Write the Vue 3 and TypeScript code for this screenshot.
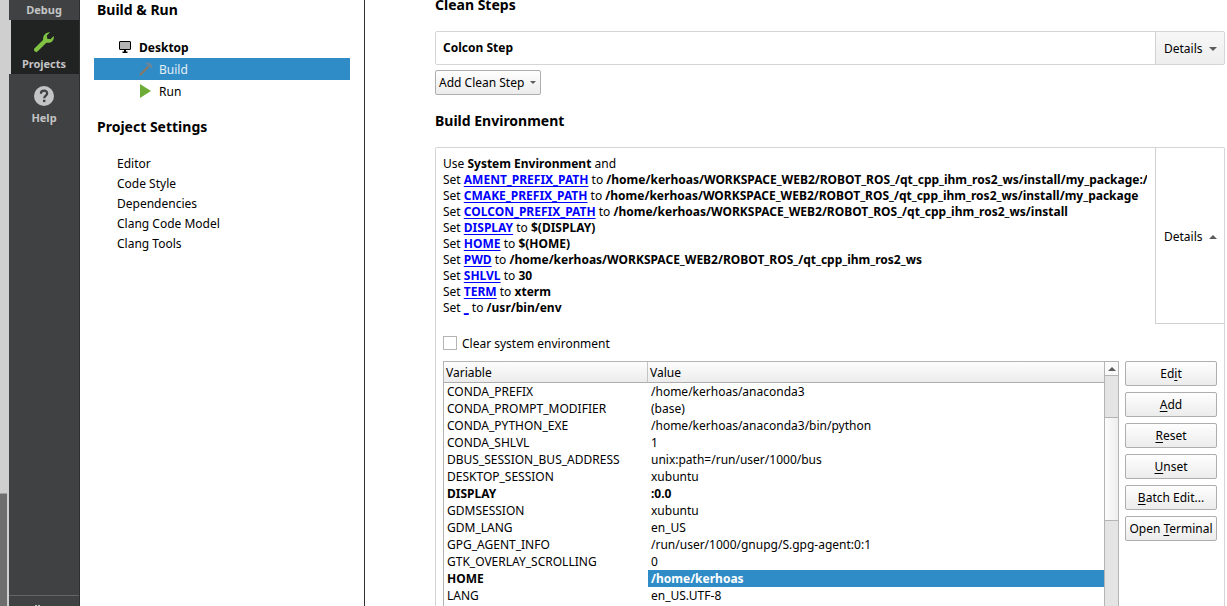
<script setup lang="ts">
import { ref } from 'vue'

interface EnvChange { name: string; value: string }
interface EnvRow { name: string; value: string; changed?: boolean; selected?: boolean }
interface Action { before: string; key: string; after: string }

const clearSystem = ref(false)

const settings: string[] = ['Editor', 'Code Style', 'Dependencies', 'Clang Code Model', 'Clang Tools']

const workspace = '/home/kerhoas/WORKSPACE_WEB2/ROBOT_ROS_/qt_cpp_ihm_ros2_ws'

const changes: EnvChange[] = [
  { name: 'AMENT_PREFIX_PATH', value: workspace + '/install/my_package:/' },
  { name: 'CMAKE_PREFIX_PATH', value: workspace + '/install/my_package' },
  { name: 'COLCON_PREFIX_PATH', value: workspace + '/install' },
  { name: 'DISPLAY', value: '$(DISPLAY)' },
  { name: 'HOME', value: '$(HOME)' },
  { name: 'PWD', value: workspace },
  { name: 'SHLVL', value: '30' },
  { name: 'TERM', value: 'xterm' },
  { name: '_', value: '/usr/bin/env' },
]

const rows: EnvRow[] = [
  { name: 'CONDA_PREFIX', value: '/home/kerhoas/anaconda3' },
  { name: 'CONDA_PROMPT_MODIFIER', value: '(base)' },
  { name: 'CONDA_PYTHON_EXE', value: '/home/kerhoas/anaconda3/bin/python' },
  { name: 'CONDA_SHLVL', value: '1' },
  { name: 'DBUS_SESSION_BUS_ADDRESS', value: 'unix:path=/run/user/1000/bus' },
  { name: 'DESKTOP_SESSION', value: 'xubuntu' },
  { name: 'DISPLAY', value: ':0.0', changed: true },
  { name: 'GDMSESSION', value: 'xubuntu' },
  { name: 'GDM_LANG', value: 'en_US' },
  { name: 'GPG_AGENT_INFO', value: '/run/user/1000/gnupg/S.gpg-agent:0:1' },
  { name: 'GTK_OVERLAY_SCROLLING', value: '0' },
  { name: 'HOME', value: '/home/kerhoas', changed: true, selected: true },
  { name: 'LANG', value: 'en_US.UTF-8' },
]

const actions: Action[] = [
  { before: 'Ed', key: 'i', after: 't' },
  { before: '', key: 'A', after: 'dd' },
  { before: '', key: 'R', after: 'eset' },
  { before: '', key: 'U', after: 'nset' },
  { before: '', key: 'B', after: 'atch Edit...' },
  { before: 'Open ', key: 'T', after: 'erminal' },
]
</script>

<template>
  <div class="window">
    <div class="outer-scroll"><div class="outer-thumb"></div></div>

    <nav class="modes" aria-label="Modes">
      <button type="button" class="mode debug">Debug</button>
      <button type="button" class="mode active">
        <svg width="22" height="22" viewBox="0 0 22 22" aria-hidden="true">
          <path d="M3.2 18.8 L11.8 10.2" stroke="#80c342" stroke-width="4.4" stroke-linecap="round" />
          <path d="M17 1.2 L13.8 4.6 L14.3 7.7 L17.4 8.2 L20.8 5 C21.4 9 18.8 12 15.2 11.8 C14.2 11.8 13 11.7 12 11.4 L10.3 9.8 C9.2 4.8 12.6 .9 17 1.2 Z" fill="#80c342" />
        </svg>
        <span>Projects</span>
      </button>
      <button type="button" class="mode">
        <svg width="22" height="22" viewBox="0 0 22 22" aria-hidden="true">
          <circle cx="11" cy="11" r="10" fill="#c3c4c5" />
          <path d="M7.9 8.7 C7.9 4.6 14.3 4.7 14.2 8.4 C14.1 10.7 11.2 10.7 11.2 13.3" fill="none" stroke="#404142" stroke-width="2.2" />
          <rect x="10" y="14.7" width="2.4" height="2.4" fill="#404142" />
        </svg>
        <span>Help</span>
      </button>
      <div class="kit">
        <svg width="22" height="20" viewBox="0 0 22 20" aria-hidden="true">
          <path d="M2 1 H4 M5 1 H7" stroke="#c3c4c5" stroke-width="2" />
        </svg>
      </div>
    </nav>

    <aside class="sidebar">
      <h2>Build &amp; Run</h2>
      <ul class="tree">
        <li class="desktop">
          <svg width="14" height="14" viewBox="0 0 14 14" aria-hidden="true">
            <rect x="1.5" y="1.5" width="11" height="8" rx=".5" fill="#b4b4b4" stroke="#000" />
            <path d="M6 10 H8 V11.5 H9.5 V13 H4.5 V11.5 H6 Z" fill="#000" />
          </svg>
          <span>Desktop</span>
        </li>
        <li class="child selected">
          <svg width="14" height="14" viewBox="0 0 14 14" aria-hidden="true">
            <path d="M1 13 L9.5 4.5" stroke="#8d7763" stroke-width="2" />
            <path d="M6.2 1.2 C9.5 0 12.7 1.4 13.6 5 L12.2 6.3 L11 4.8 L9.5 5 L8.3 3.8 L8.5 2.5 Z" fill="#6c8698" />
          </svg>
          <span>Build</span>
        </li>
        <li class="child">
          <svg width="14" height="14" viewBox="0 0 14 14" aria-hidden="true">
            <path d="M1 0 L12 7 L1 14 Z" fill="#6fac37" />
          </svg>
          <span>Run</span>
        </li>
      </ul>
      <h2>Project Settings</h2>
      <ul class="settings">
        <li v-for="item in settings" :key="item">{{ item }}</li>
      </ul>
    </aside>

    <main class="content">
      <h2 class="clean-title">Clean Steps</h2>
      <section class="step">
        <strong>Colcon Step</strong>
        <button type="button" class="details raised">
          <span>Details</span>
          <svg width="8" height="4" viewBox="0 0 8 4" aria-hidden="true"><path d="M0 0 H8 L4 4 Z" fill="#5c5c5c" /></svg>
        </button>
      </section>
      <button type="button" class="btn add-step">
        Add Clean Step
        <svg width="6" height="3" viewBox="0 0 6 3" aria-hidden="true"><path d="M0 0 H6 L3 3 Z" fill="#5c5c5c" /></svg>
      </button>

      <h2 class="env-title">Build Environment</h2>
      <section class="env">
        <div class="summary-row">
          <div class="summary">
            <div>Use <b>System Environment</b> and</div>
            <div v-for="c in changes" :key="c.name">Set <a href="#"><b>{{ c.name }}</b></a> to <b>{{ c.value }}</b></div>
          </div>
          <button type="button" class="details open">
            <span>Details</span>
            <svg width="8" height="4" viewBox="0 0 8 4" aria-hidden="true"><path d="M0 4 H8 L4 0 Z" fill="#5c5c5c" /></svg>
          </button>
        </div>

        <label class="clear">
          <input v-model="clearSystem" type="checkbox" />
          <span>Clear system environment</span>
        </label>

        <div class="editor">
          <div class="table-frame">
            <div class="table-view">
              <table>
                <thead>
                  <tr><th scope="col" class="name">Variable</th><th scope="col">Value</th></tr>
                </thead>
                <tbody>
                  <tr v-for="r in rows" :key="r.name" :class="{ changed: r.changed, current: r.selected }">
                    <td>{{ r.name }}</td>
                    <td>{{ r.value }}</td>
                  </tr>
                </tbody>
              </table>
            </div>
            <div class="scrollbar">
              <button type="button" class="arrow" aria-label="Scroll up">
                <svg width="8" height="4" viewBox="0 0 8 4" aria-hidden="true"><path d="M0 4 H8 L4 0 Z" fill="#5c5c5c" /></svg>
              </button>
              <div class="thumb"></div>
            </div>
          </div>
          <div class="actions">
            <button v-for="a in actions" :key="a.key" type="button" class="btn">{{ a.before }}<u>{{ a.key }}</u>{{ a.after }}</button>
          </div>
        </div>
      </section>
    </main>
  </div>
</template>

<style>
body {
  margin: 0;
  overflow: hidden;
}
</style>

<style scoped>
.window,
.window * {
  box-sizing: border-box;
}
.window {
  display: flex;
  height: 100vh;
  overflow: hidden;
  background: #fff;
  color: #000;
  font: 12px/16px "Noto Sans", sans-serif;
}
button {
  margin: 0;
  padding: 0;
  border: 0;
  background: none;
  color: inherit;
  font: inherit;
}
svg {
  display: block;
  flex: none;
}
ul {
  margin: 0;
  padding: 0;
  list-style: none;
}
h2 {
  margin: 0;
  font-size: 14px;
  line-height: 20px;
  font-weight: 700;
}
.outer-scroll {
  display: flex;
  flex: none;
  align-items: flex-end;
  width: 9px;
  background: #cfcfcf;
}
.outer-thumb {
  width: 7px;
  height: 113px;
  border-top: 1px solid #a0a0a0;
  background: #6e6e6e;
}
.modes {
  display: flex;
  flex: none;
  flex-direction: column;
  width: 71px;
  border-right: 1px solid #2e2f30;
  background: #404142;
}
.mode {
  display: flex;
  flex-direction: column;
  align-items: center;
  gap: 3px;
  height: 54px;
  padding-top: 11px;
  color: #c3c4c5;
  font-size: 11px;
  font-weight: 700;
}
.mode.debug {
  height: 20px;
  padding-top: 2px;
}
.mode.active {
  padding-right: 2px;
  border-left: 2px solid #cfcfcf;
  background: #212222;
}
.kit {
  height: 11px;
  margin-top: auto;
  padding: 9px 24px 0;
  border-top: 1px solid #646566;
  overflow: hidden;
}
.sidebar {
  flex: none;
  width: 285px;
  border-right: 1px solid #2e2f30;
}
.sidebar h2 {
  padding-left: 17px;
}
.tree {
  margin: 16px 14px 15px;
}
.tree li {
  display: flex;
  align-items: center;
  gap: 7px;
  height: 22px;
  padding-left: 24px;
}
.tree span,
.details span {
  padding-top: 2px;
}
.tree .child {
  gap: 6px;
  padding-left: 45px;
}
.desktop {
  font-weight: 700;
}
.selected {
  background: #308cc6;
  color: #e4eff7;
}
.settings {
  padding: 17px 0 0 37px;
  line-height: 20px;
}
.content {
  display: flex;
  flex: 1;
  flex-direction: column;
  min-width: 0;
  padding: 0 2px 0 70px;
}
.clean-title {
  margin-top: -5px;
}
.step {
  display: flex;
  flex: none;
  align-items: center;
  justify-content: space-between;
  height: 34px;
  margin-top: 16px;
  padding-left: 7px;
  border: 1px solid #d5d5d5;
  border-radius: 2px;
}
.details {
  display: flex;
  flex: none;
  align-items: center;
  align-self: stretch;
  gap: 6px;
  width: 69px;
  padding-left: 8px;
  border-left: 1px solid #d0d0d0;
}
.details svg {
  margin-top: 2px;
}
.details.raised {
  background: linear-gradient(#f7f7f7, #eeeeee);
}
.details.open {
  border-bottom: 1px solid #d0d0d0;
}
.btn {
  height: 25px;
  border: 1px solid #aeaeae;
  border-radius: 2px;
  background: linear-gradient(#fefefe, #ececec);
  white-space: nowrap;
}
.add-step {
  display: flex;
  flex: none;
  align-items: center;
  align-self: flex-start;
  gap: 6px;
  margin-top: 5px;
  padding: 0 4px 0 3px;
}
.env-title {
  margin-top: 16px;
}
.env {
  display: flex;
  flex: 1;
  flex-direction: column;
  min-height: 0;
  margin-top: 16px;
  border: 1px solid #d5d5d5;
  border-bottom: 0;
  border-radius: 2px 2px 0 0;
}
.summary-row {
  display: flex;
}
.summary {
  flex: 1;
  min-width: 0;
  margin: 8px 8px 8px 7px;
  overflow: hidden;
  white-space: nowrap;
}
.summary a {
  color: #0000ff;
  text-decoration: underline;
  text-underline-offset: 2px;
  text-decoration-skip-ink: none;
}
.clear {
  display: flex;
  align-items: center;
  align-self: flex-start;
  gap: 5px;
  margin: 10px 0 9px 7px;
}
.clear span {
  padding-top: 2px;
}
.clear input {
  width: 14px;
  height: 14px;
  margin: 0;
  border: 1px solid #b4b4b4;
  background: #fff;
  appearance: none;
}
.clear input:checked {
  background: #308cc6;
}
.editor {
  display: flex;
  flex: 1;
  gap: 6px;
  min-height: 0;
  padding: 0 7px;
}
.table-frame {
  display: flex;
  flex: 1;
  min-width: 0;
  border: 1px solid #b4b4b4;
  border-bottom: 0;
}
.table-view {
  flex: 1;
  min-width: 0;
  overflow: hidden;
}
table {
  width: 100%;
  border-collapse: separate;
  border-spacing: 0;
  table-layout: fixed;
}
th {
  height: 21px;
  padding: 2px 2px 0;
  border-bottom: 1px solid #aeaeae;
  background: linear-gradient(#fdfdfd, #ececec);
  font-weight: 400;
  text-align: left;
}
th.name {
  width: 204px;
  border-right: 1px solid #c4c4c4;
}
td {
  height: 17px;
  padding: 0 3px;
  line-height: 17px;
  white-space: nowrap;
}
.changed {
  font-weight: 700;
}
.current td:last-child {
  background: #308cc6;
  color: #fff;
}
.scrollbar {
  flex: none;
  width: 14px;
  border-left: 1px solid #b4b4b4;
  background: #e4e4e4;
}
.arrow {
  display: flex;
  align-items: center;
  justify-content: center;
  width: 100%;
  height: 14px;
  border-bottom: 1px solid #b4b4b4;
  background: #fafafa;
}
.thumb {
  height: 104px;
  margin-top: 41px;
  border-top: 1px solid #b4b4b4;
  border-bottom: 1px solid #b4b4b4;
  background: linear-gradient(90deg, #fdfdfd, #ededed);
}
.actions {
  display: flex;
  flex: none;
  flex-direction: column;
  gap: 6px;
  width: 92px;
}
.actions u {
  text-underline-offset: 2px;
}
</style>
